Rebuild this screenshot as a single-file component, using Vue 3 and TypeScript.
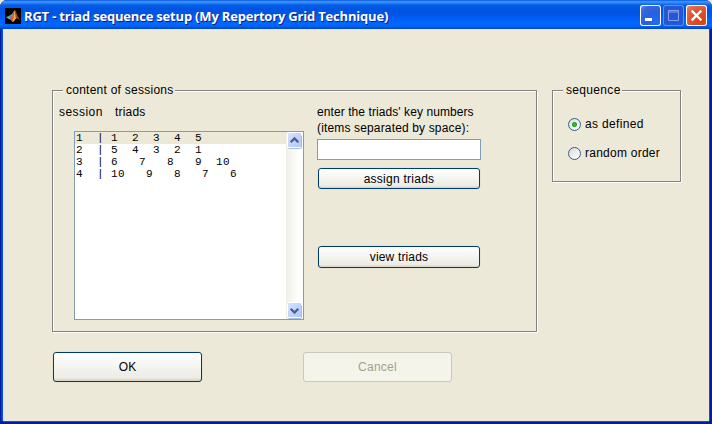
<script setup lang="ts">
import { ref } from 'vue'

const sessions: string[] = [
  '1  | 1  2  3  4  5',
  '2  | 5  4  3  2  1',
  '3  | 6   7   8   9  10',
  '4  | 10   9   8   7   6',
]
const selected = ref(0)
const keys = ref('')
const order = ref<'defined' | 'random'>('defined')
</script>

<template>
  <div class="window">
    <header class="titlebar">
      <svg class="logo" width="16" height="16" viewBox="0 0 16 16">
        <rect width="16" height="16" fill="#000" />
        <path d="M1 9.2 4.5 7.4 7 9.6 4.4 11.4Z" fill="#5aa3c4" />
        <path d="M4.5 7.4 6.6 6.3C7.8 5.6 8.5 3 9.8 2L7.6 8.8 7 9.6Z" fill="#7096a6" />
        <path d="M9.8 2C8.6 5 8 7.5 6.4 9.8L4.4 11.4C6 11.2 6.7 13.3 7.6 14 9.6 13.4 10 10.5 11.7 10.3L10.6 4Z" fill="#e0601e" />
        <path d="M9.8 2C9.2 6 9 9 7.6 14 9.4 13 9.8 11 10.8 10.4Z" fill="#f9ac55" />
        <path d="M9.8 2C11.6 4 12.5 9 15.2 12.4 13.8 11.6 12.5 9.8 11 10.5Z" fill="#c23c14" />
      </svg>
      <h1 class="title">RGT - triad sequence setup (My Repertory Grid Technique)</h1>
      <div class="controls">
        <button class="ctl" type="button">
          <svg width="21" height="21"><rect x="5" y="13" width="7" height="3" fill="#fff" /></svg>
        </button>
        <button class="ctl dim" type="button">
          <svg width="21" height="21"><path d="M5.5 5.5h10v10h-10zM5 7h11" fill="none" stroke="#8aa1ea" /></svg>
        </button>
        <button class="ctl close" type="button">
          <svg width="21" height="21"><path d="M6.5 6.5 14.5 14.5M14.5 6.5 6.5 14.5" stroke="#fff" stroke-width="2.3" stroke-linecap="square" /></svg>
        </button>
      </div>
    </header>

    <main class="body">
      <div class="groups">
        <section class="group sessions">
          <div class="legend"><span class="t-legend">content of sessions</span></div>
          <div class="columns">
            <div class="left">
              <div class="heads"><span class="h-session">session</span><span class="h-triads">triads</span></div>
              <div class="listbox">
                <ul class="rows">
                  <li
                    v-for="(row, i) in sessions"
                    :key="row"
                    :class="{ selected: i === selected }"
                    @click="selected = i"
                  >{{ row }}</li>
                </ul>
                <div class="scroll">
                  <svg width="17" height="17" viewBox="0 0 17 17">
                    <rect x="1.5" y=".5" width="14" height="15" rx="1.5" fill="url(#thumb)" stroke="#fff" />
                    <path d="M2.5 16.5h12q1 0 1-1v-12" fill="none" stroke="#a9bbe0" />
                    <path d="M4.7 10.3 8.5 6.5 12.3 10.3" fill="none" stroke="#4d6185" stroke-width="2.3" />
                    <defs>
                      <linearGradient id="thumb" x2="1" y2="1">
                        <stop offset="0" stop-color="#dbe5ff" />
                        <stop offset=".5" stop-color="#c3d3fd" />
                        <stop offset="1" stop-color="#b0c6fa" />
                      </linearGradient>
                    </defs>
                  </svg>
                  <svg width="17" height="17" viewBox="0 0 17 17">
                    <rect x="1.5" y=".5" width="14" height="15" rx="1.5" fill="url(#thumb)" stroke="#fff" />
                    <path d="M2.5 16.5h12q1 0 1-1v-12" fill="none" stroke="#a9bbe0" />
                    <path d="M4.7 6.7 8.5 10.5 12.3 6.7" fill="none" stroke="#4d6185" stroke-width="2.3" />
                  </svg>
                </div>
              </div>
            </div>
            <div class="right">
              <label class="prompt" for="keys">
                <span class="p1">enter the triads' key numbers</span>
                <span class="p2">(items separated by space):</span>
              </label>
              <input id="keys" v-model="keys" class="edit" type="text" />
              <button class="push assign" type="button"><span class="t-assign">assign triads</span></button>
              <button class="push view" type="button"><span class="t-view">view triads</span></button>
            </div>
          </div>
        </section>

        <section class="group sequence">
          <div class="legend"><span class="t-seq">sequence</span></div>
          <div class="options">
            <div class="option" @click="order = 'defined'">
              <span class="radio" :class="{ on: order === 'defined' }"></span><span class="t-def">as defined</span>
            </div>
            <div class="option" @click="order = 'random'">
              <span class="radio" :class="{ on: order === 'random' }"></span><span class="t-rand">random order</span>
            </div>
          </div>
        </section>
      </div>

      <footer class="actions">
        <button class="push big" type="button"><span class="t-ok">OK</span></button>
        <button class="push big off" type="button" disabled><span class="t-cancel">Cancel</span></button>
      </footer>
    </main>
  </div>
</template>

<style>
body {
  background: #ece9d8;
}
</style>

<style scoped>
* {
  box-sizing: border-box;
}
.window {
  width: 712px;
  height: 424px;
  display: flex;
  flex-direction: column;
  overflow: hidden;
  font: 12px/16px 'Liberation Sans', Arial, sans-serif;
  color: #000;
  white-space: nowrap;
  border-radius: 7px 7px 0 0;
  background: #001ea0;
}
.titlebar {
  height: 29px;
  flex: none;
  display: flex;
  align-items: center;
  padding: 2px 5px 0;
  background: linear-gradient(#0453d8 0, #3a92ff 1.5px, #2a85f8 3px, #0460e4 5px, #0054e3 9px, #0055e5 14px, #0062fa 20px, #0068ff 25px, #005be8 27px, #0042c4 29px);
}
.logo {
  flex: none;
}
.title {
  margin: 0 0 0 3px;
  flex: 1;
  font: bold 13px/16px 'Open Sans', 'Noto Sans', sans-serif;
  letter-spacing: -0.19px;
  color: #fff;
  text-shadow: 1px 1px 0 #0a1f8a;
}
.controls {
  display: flex;
  gap: 2px;
}
.ctl {
  width: 21px;
  height: 21px;
  padding: 0;
  border: 0;
  border-radius: 3px;
  background: radial-gradient(circle at 80% 85%, #1f6bf5, #2a5fe0 45%, #3a67dd 75%, #7b9bf0);
  box-shadow: inset 0 0 0 1px #fff;
}
.ctl svg {
  display: block;
}
.dim {
  background: #2456d8;
  box-shadow: inset 0 0 0 1px #6a8cec;
}
.close {
  background: radial-gradient(circle at 75% 80%, #dc4310, #dd5230 50%, #e07254 80%, #efa08a);
}
.body {
  flex: 1;
  margin: 0 3px 3px;
  padding: 61px 0 0 49px;
  background: #ece9d8;
  box-shadow: 0 1px 0 #0850e8, 1px 0 0 #0850e8, -1px 0 0 #0850e8, -2px 0 0 #0838d8;
}
.groups {
  display: flex;
  gap: 15px;
  align-items: flex-start;
}
.group {
  border: 1px solid #848284;
  box-shadow: 1px 1px 0 #fff, inset 1px 1px 0 #fff;
}
.sessions {
  width: 485px;
  height: 242px;
}
.sequence {
  width: 129px;
  height: 92px;
}
.legend {
  height: 16px;
  margin: -9px 0 0 10px;
  padding: 0 0 0 3px;
  background: #ece9d8;
}
.sessions .legend {
  width: 112px;
}
.sequence .legend {
  width: 59px;
}
.t-legend {
  letter-spacing: 0.25px;
}
.h-session {
  width: 44px;
  letter-spacing: 0.45px;
}
.h-triads {
  letter-spacing: 0.2px;
}
.p1 {
  letter-spacing: 0.08px;
}
.p2,
.t-view {
  letter-spacing: 0.15px;
}
.t-assign,
.t-rand,
.t-cancel {
  letter-spacing: 0.25px;
}
.t-seq,
.t-def {
  letter-spacing: 0.33px;
}
.columns {
  display: flex;
  gap: 13px;
  padding: 6px 0 0 6px;
}
.left {
  width: 245px;
}
.heads {
  display: flex;
  gap: 12px;
  height: 16px;
}
.listbox {
  width: 230px;
  height: 189px;
  margin: 11px 0 0 15px;
  display: flex;
  border: 1px solid #7f9db9;
  background: #fff;
}
.rows {
  flex: 1;
  margin: 0;
  padding: 0;
  list-style: none;
  font: 11px/12px 'Liberation Mono', monospace;
  letter-spacing: 0.4px;
}
.rows li {
  height: 12px;
  padding-left: 1px;
  white-space: pre;
}
.rows .selected {
  background: #ece9d8;
}
.scroll {
  width: 17px;
  display: flex;
  flex-direction: column;
  justify-content: space-between;
  background: linear-gradient(90deg, #f0efe7, #fefefb 70%, #fff);
}
.scroll svg {
  display: block;
}
.right {
  display: flex;
  flex-direction: column;
}
.prompt {
  display: flex;
  flex-direction: column;
}
.edit {
  width: 164px;
  height: 21px;
  margin-top: 3px;
  padding: 0 3px;
  border: 1px solid #7f9db9;
  background: #fff;
  outline: 0;
}
.push {
  display: flex;
  align-items: center;
  justify-content: center;
  padding: 0;
  width: 162px;
  height: 21px;
  border: 1px solid #003c74;
  border-radius: 3px;
  background: linear-gradient(#fff, #f4f4f0 50%, #ecebe5 88%, #d8d0c4);
  box-shadow: 0 0 0 1px #e6e2d0, 1px 1px 0 #f6f4ea;
  font: inherit;
  color: #000;
}
.assign {
  margin: 8px 0 0 1px;
}
.view {
  height: 22px;
  margin: 57px 0 0 1px;
}
.options {
  display: flex;
  flex-direction: column;
  gap: 13px;
  padding: 18px 0 0 15px;
}
.option {
  height: 16px;
  display: flex;
  align-items: center;
  gap: 4px;
}
.radio {
  width: 13px;
  height: 13px;
  border: 1px solid #33608c;
  border-radius: 50%;
  background: linear-gradient(135deg, #dcdcd7, #fff);
}
.radio.on {
  background: radial-gradient(circle, #3fc63a 0, #21a121 2px, #21a12100 3px), linear-gradient(135deg, #dcdcd7, #fff);
}
.actions {
  display: flex;
  gap: 101px;
  padding: 20px 0 0 1px;
}
.big {
  width: 149px;
  height: 30px;
}
.off {
  color: #a1a192;
  border-color: #c9c7ba;
  background: #f5f4ea;
  box-shadow: none;
}
</style>
